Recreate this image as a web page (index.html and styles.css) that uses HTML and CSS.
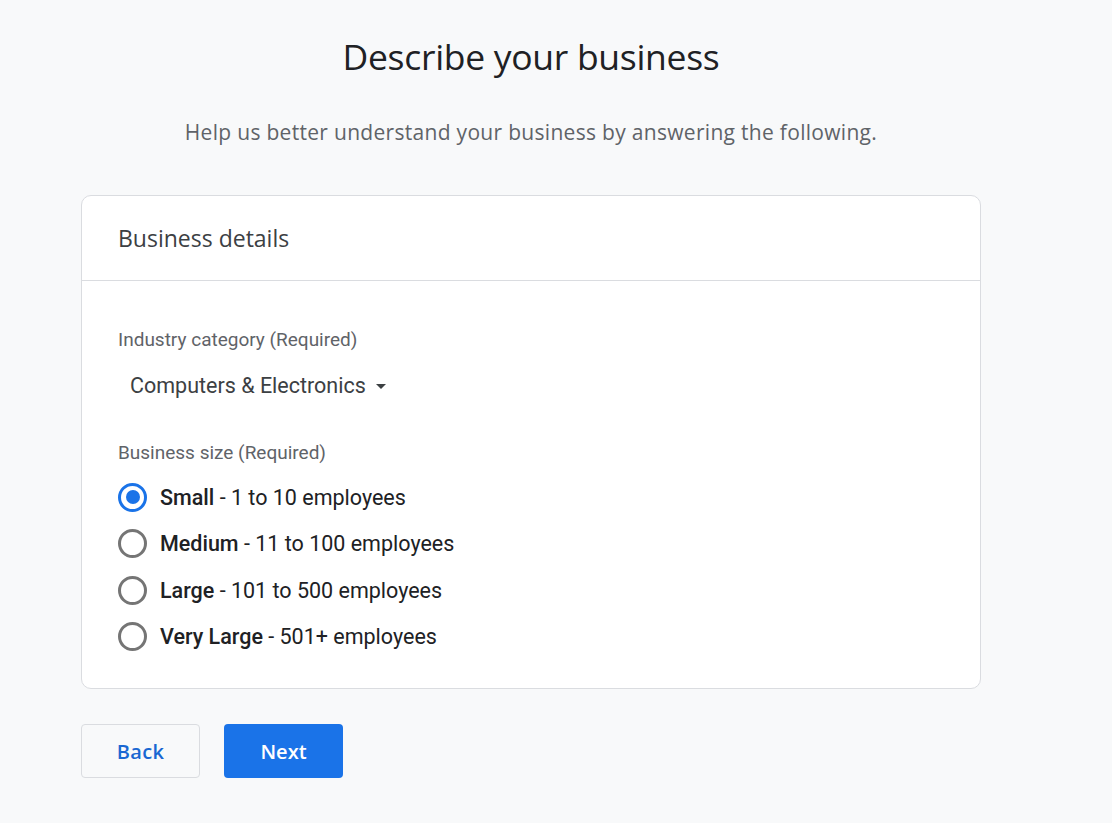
FILE: index.html
```html
<!DOCTYPE html>
<html lang="en">
<head>
<meta charset="utf-8">
<title>Describe your business</title>
<link rel="stylesheet" href="styles.css">
</head>
<body>
<main class="page">
  <h1 class="title">Describe your business</h1>
  <p class="subtitle">Help us better understand your business by answering the following.</p>
  <section class="card">
    <div class="card-header">Business details</div>
    <div class="card-body">
      <div class="field-label">Industry category (Required)</div>
      <div class="dropdown">
        <span>Computers &amp; Electronics</span>
        <svg class="caret" width="10" height="5" viewBox="0 0 10 5"><path d="M0 0h10L5 5z" fill="#3c4043"/></svg>
      </div>
      <div class="field-label size-label">Business size (Required)</div>
      <div class="radios">
        <label class="radio-row"><span class="radio checked"></span><span class="radio-text"><b>Small</b> - 1 to 10 employees</span></label>
        <label class="radio-row"><span class="radio"></span><span class="radio-text"><b>Medium</b> - 11 to 100 employees</span></label>
        <label class="radio-row"><span class="radio"></span><span class="radio-text"><b>Large</b> - 101 to 500 employees</span></label>
        <label class="radio-row"><span class="radio"></span><span class="radio-text"><b>Very Large</b> - 501+ employees</span></label>
      </div>
    </div>
  </section>
  <div class="actions">
    <button class="btn btn-back">Back</button>
    <button class="btn btn-next">Next</button>
  </div>
</main>
</body>
</html>
```

FILE: styles.css
```css
html, body {
  margin: 0;
  padding: 0;
  background: #f8f9fa;
}
body {
  font-family: Roboto, "Liberation Sans", sans-serif;
  color: #202124;
  height: 823px;
  overflow: hidden;
}
.page {
  width: 900px;
  margin-left: 81px;
  padding-top: 36px;
}
.title {
  margin: 0;
  font-family: "Open Sans", "Liberation Sans", sans-serif;
  font-weight: 400;
  font-size: 35.5px;
  line-height: 40px;
  letter-spacing: -0.3px;
  text-align: center;
  color: #202124;
}
.subtitle {
  margin: 42px 0 0;
  font-family: "Open Sans", "Liberation Sans", sans-serif;
  font-size: 21px;
  line-height: 28px;
  letter-spacing: 0.3px;
  text-align: center;
  color: #5f6368;
}
.card {
  margin-top: 49px;
  background: #fff;
  border: 1px solid #dadce0;
  border-radius: 10px;
}
.card-header {
  height: 85px;
  box-sizing: border-box;
  display: flex;
  align-items: center;
  padding-left: 36px;
  border-bottom: 1px solid #dadce0;
  font-family: "Open Sans", "Liberation Sans", sans-serif;
  font-size: 23px;
  color: #3c4043;
}
.card-body {
  padding: 47px 36px 28px;
}
.field-label {
  font-size: 19px;
  line-height: 24px;
  color: #5f6368;
}
.dropdown {
  margin-top: 20px;
  padding-left: 12px;
  display: flex;
  align-items: center;
  gap: 10px;
  font-size: 21.5px;
  line-height: 28px;
  color: #3c4043;
}
.caret { margin-top: 1px; }
.size-label {
  margin-top: 41px;
}
.radios {
  margin-top: 9px;
  display: flex;
  flex-direction: column;
}
.radio-row {
  height: 46.5px;
  display: flex;
  align-items: center;
  gap: 13px;
  font-size: 21.5px;
  color: #202124;
}
.radio-row b { font-weight: 500; }
.radio {
  width: 29px;
  height: 29px;
  flex: none;
  box-sizing: border-box;
  border: 3px solid #757575;
  border-radius: 50%;
  display: flex;
  align-items: center;
  justify-content: center;
}
.radio.checked {
  border-color: #1a73e8;
}
.radio.checked::after {
  content: "";
  width: 14px;
  height: 14px;
  border-radius: 50%;
  background: #1a73e8;
}
.actions {
  margin-top: 35px;
  display: flex;
  gap: 24px;
}
.btn {
  width: 119px;
  height: 54px;
  border-radius: 4px;
  font-family: "Open Sans", "Liberation Sans", sans-serif;
  font-size: 20px;
  font-weight: 600;
  cursor: pointer;
}
.btn-back {
  background: #f8f9fa;
  border: 1px solid #dadce0;
  color: #1967d2;
  letter-spacing: 0.3px;
}
.btn-next {
  background: #1a73e8;
  border: none;
  color: #fff;
}
```
